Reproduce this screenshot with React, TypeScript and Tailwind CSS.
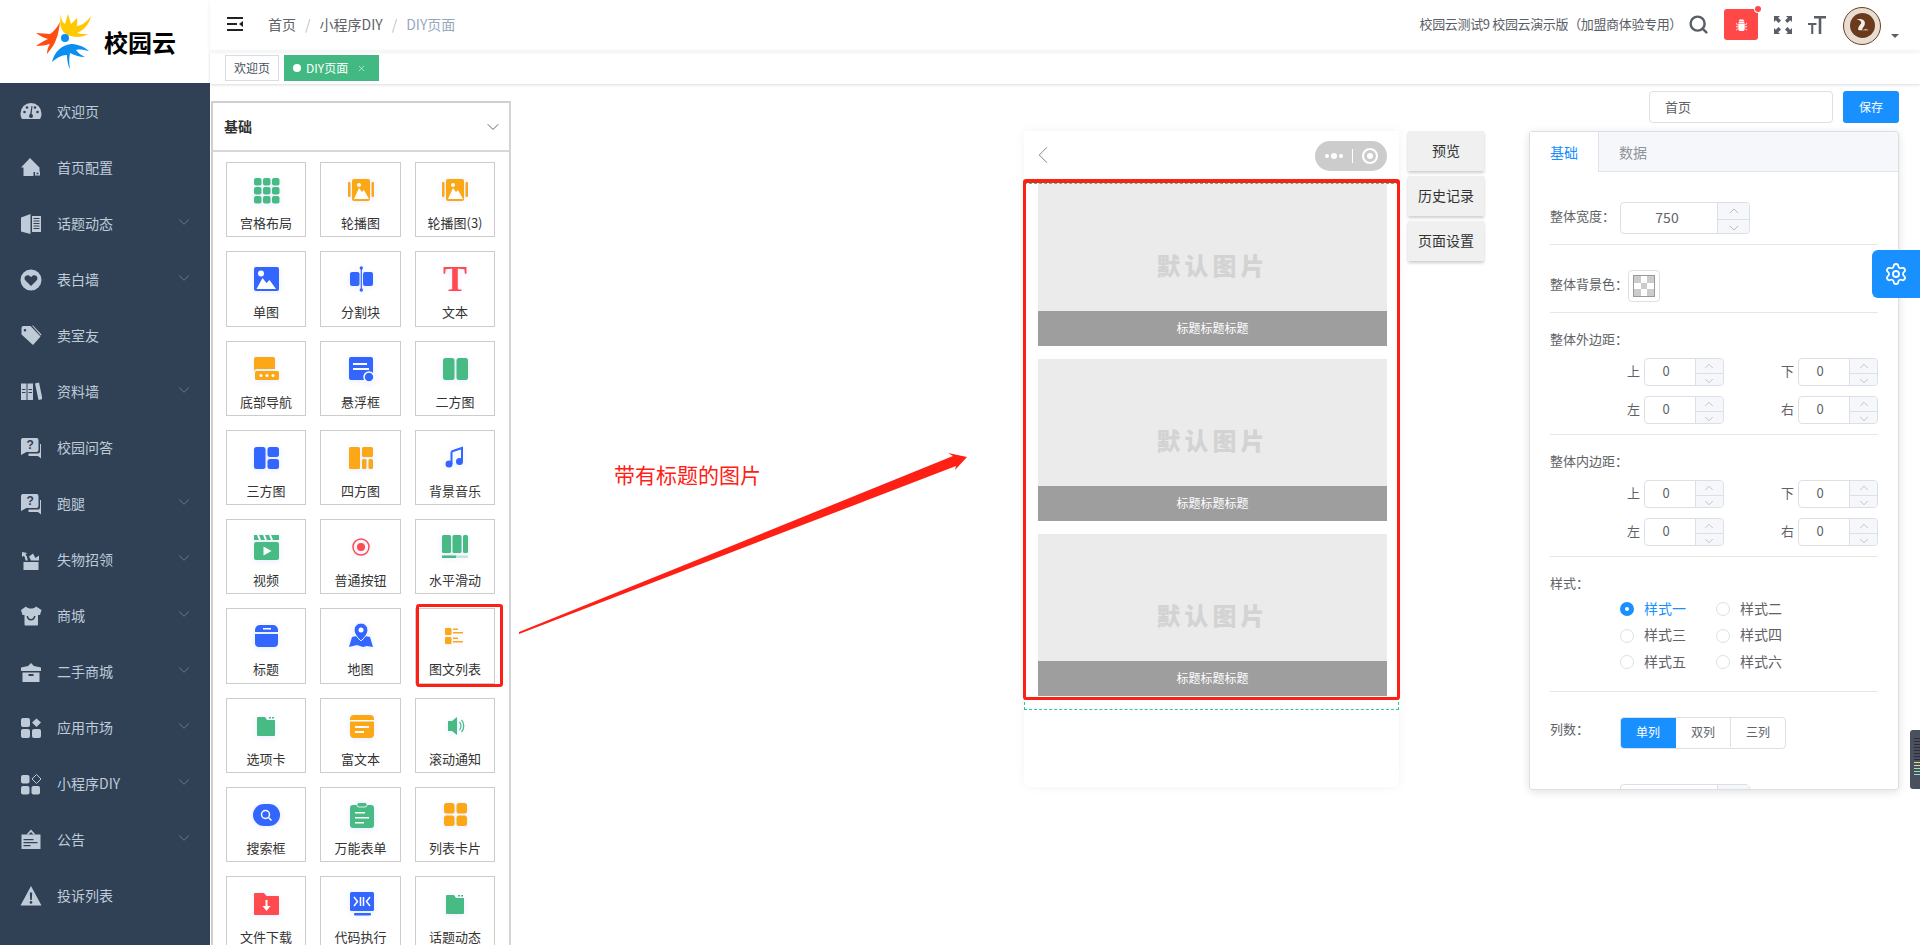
import { ChevronDown, ChevronLeft, ChevronUp, Search, Settings, X } from 'lucide-react';
import type { ReactNode } from 'react';

const font = { fontFamily: '"Noto Sans CJK SC", "Liberation Sans", sans-serif' };

const ORANGE = '#fca715';
const GREEN = '#48bb85';
const BLUE = '#3366ff';
const RED = '#ff4a50';

const navIcons: Record<string, ReactNode> = {
  gauge: (
    <>
      <path d="M11 2a10.500 10.500 0 0 0-10.500 10.500c0 2 .5 4 1.500 5.500h18c1-1.500 1.500-3.500 1.500-5.500A10.500 10.500 0 0 0 11 2z" />
      <g fill="#304156">
        <circle cx="4.500" cy="11" r="1.300" />
        <circle cx="7" cy="6.500" r="1.300" />
        <circle cx="15" cy="6.500" r="1.300" />
        <circle cx="17.500" cy="11" r="1.300" />
        <path d="M11.500 5h1l-1 9h-1.500z" />
        <circle cx="11" cy="15" r="2" />
      </g>
    </>
  ),
  home: (
    <>
      <path d="M10 1 1 10.500h2.500V19h8.500v-4h7.500V10.500z" />
      <path d="M12 14.500h1.500V19H12zM15 14.500h5v4h-5zm1.500 1.200v1.600h2v-1.600z" />
    </>
  ),
  book: (
    <>
      <path d="M1 4.500 10.500 1v20L1 18.500z" />
      <path d="M12 3h9v16h-9zm1.500 2v1h6V5zm0 2.500v1h6v-1zm0 2.500v1h6v-1zm0 2.500v1h6v-1zm0 2.500v1h6v-1z" />
    </>
  ),
  heart: (
    <path
      fillRule="evenodd"
      d="M11 .5a10.500 10.500 0 1 0 0 21 10.500 10.500 0 0 0 0-21zM11 17 5.500 11.500c-2.500-3 .5-6.500 3.500-5 1 .5 1.500 1 2 1.800.5-.8 1-1.300 2-1.800 3-1.500 6 2 3.500 5z"
    />
  ),
  tag: (
    <>
      <path d="M3.500 1h7l10 10.500-7.500 8.500L1.500 9.500V3a2 2 0 0 1 2-2zm1.500 3a1.300 1.300 0 1 0 0 2.600A1.300 1.300 0 0 0 5 4z" fillRule="evenodd" />
      <path d="M12 .5h1l8.500 9-.8 1z" />
    </>
  ),
  shelf: (
    <path
      fillRule="evenodd"
      d="M1 2.500h5.500v16.500H1zM7.500 2.500H13V19H7.500zM15 2.500l4-1 3.500 16.500-4 1zM2 8v1h3.500V8zm0 3v1h3.500v-1zm6.500-3v1H12V8zm0 3v1H12v-1z"
    />
  ),
  ask: (
    <>
      <path d="M2.500 1h14a2 2 0 0 1 2 2v10a2 2 0 0 1-2 2H6.500L1 18V3a2 2 0 0 1 1.500-2z" />
      <path d="M20 7h1v14.500L18 19H8.500v-2.500h9.500a2 2 0 0 0 2-2z" />
      <text x="6.500" y="11.500" fontSize="12" fontWeight="700" fill="#304156" fontFamily="Liberation Sans">?</text>
    </>
  ),
  lost: (
    <>
      <path d="M3.500 13h15v8h-15zM2 3l5 1-1.500 1.500c1 1 2 3 2.200 6H5.500c-.2-2.200-.8-3.800-1.700-4.800L2 8zM11 11.500l-2-4 4-3 2.500 4.500 3.500-2.500v5z" />
    </>
  ),
  shop: (
    <path
      fillRule="evenodd"
      d="M6 1.500C7 3 9 3.500 11 3.500s4-.5 5-2l5.500 3.500-1.500 5h-2v9.500a1 1 0 0 1-1 1H5.500a1 1 0 0 1-1-1V10h-2L1 5zM6.500 11c.5 3 2.200 4.500 4.500 4.500s4-1.500 4.500-4.500H14c-.4 2-1.500 3-3 3s-2.600-1-3-3z"
    />
  ),
  gift: (
    <>
      <path d="M1 6.500 8 5l3-3 3 3 7 1.500V10H1z" />
      <path fillRule="evenodd" d="M2.500 11.500h17V21h-17zM8.500 13v2h5v-2z" />
    </>
  ),
  apps: (
    <>
      <rect x="1" y="1" width="9" height="9" rx="2" />
      <rect x="1" y="12" width="9" height="9" rx="2" />
      <rect x="12" y="12" width="9" height="9" rx="2" />
      <path d="M16.500 1.500 21 5.500l-4.500 4.500-4.500-4.500z" />
    </>
  ),
  appsOutline: (
    <>
      <rect x="1" y="2" width="8.500" height="8.500" rx="2" />
      <rect x="1" y="13" width="8.500" height="8.500" rx="2" />
      <rect x="11.500" y="13" width="8.500" height="8.500" rx="2" />
      <path d="m16.500 1.500 4.500 4.500-4.500 4.500L12 6z" fill="none" stroke="#bfcbd9" strokeWidth="1" />
    </>
  ),
  notice: (
    <>
      <path d="M11 .5 15.500 5.500h-2L11 3 8.500 5.500h-2z" />
      <path fillRule="evenodd" d="M1.500 5.500h19V20h-19zM3.500 10v1.200h10V10zm0 3v1.200h14V13zm0 3v1.200h7V16z" />
    </>
  ),
  warn: (
    <path
      fillRule="evenodd"
      d="M11 1 21.500 20.500h-21zM9.800 7.500l.4 7.500h1.600l.4-7.500zM11 16a1.400 1.400 0 1 0 0 2.800 1.400 1.400 0 0 0 0-2.800z"
    />
  ),
};

const menu = [
  { label: '欢迎页', icon: 'gauge' },
  { label: '首页配置', icon: 'home' },
  { label: '话题动态', icon: 'book', sub: true },
  { label: '表白墙', icon: 'heart', sub: true },
  { label: '卖室友', icon: 'tag' },
  { label: '资料墙', icon: 'shelf', sub: true },
  { label: '校园问答', icon: 'ask' },
  { label: '跑腿', icon: 'ask', sub: true },
  { label: '失物招领', icon: 'lost', sub: true },
  { label: '商城', icon: 'shop', sub: true },
  { label: '二手商城', icon: 'gift', sub: true },
  { label: '应用市场', icon: 'apps', sub: true },
  { label: '小程序DIY', icon: 'appsOutline', sub: true },
  { label: '公告', icon: 'notice', sub: true },
  { label: '投诉列表', icon: 'warn' },
];

function Picture({ color, x = 5, w = 18 }: { color: string; x?: number; w?: number }) {
  return (
    <>
      <rect x={x} y="3" width={w} height="22" rx="2" fill={color} />
      <path d={`M${x + 2} 23l5-11 3 4 2-2 5 9z`} fill="#fff" />
      <circle cx={x + 7} cy="9" r="2" fill="#fff" />
    </>
  );
}

const widgetIcons: Record<string, ReactNode> = {
  grid: (
    <g fill={GREEN}>
      {[2, 11, 20].flatMap((y) =>
        [2, 11, 20].map((x) => <rect key={`${x}-${y}`} x={x} y={y} width="7.500" height="7.500" rx="2" />),
      )}
    </g>
  ),
  carousel: (
    <>
      <Picture color={ORANGE} />
      <rect x="1" y="6" width="2.500" height="15" rx="1" fill={ORANGE} />
      <rect x="24.500" y="6" width="2.500" height="15" rx="1" fill={ORANGE} />
    </>
  ),
  single: (
    <>
      <rect x="2" y="2" width="25" height="24" rx="2" fill={BLUE} />
      <path d="M4.500 24l6-11 4 5 3-3 6.500 9z" fill="#fff" />
      <circle cx="9" cy="8.500" r="3" fill="#fff" />
    </>
  ),
  divider: (
    <>
      <rect x="3" y="7" width="9.500" height="14" rx="2" fill={BLUE} />
      <rect x="16" y="7" width="10" height="14" rx="2" fill={BLUE} />
      <rect x="13.700" y="3" width="1.200" height="22" fill={BLUE} />
      <circle cx="14.300" cy="3" r="1.700" fill={BLUE} />
      <circle cx="14.300" cy="25" r="1.700" fill={BLUE} />
    </>
  ),
  text: (
    <text x="14" y="26" textAnchor="middle" fontSize="36" fontWeight="700" fill={RED} fontFamily="Liberation Serif">
      T
    </text>
  ),
  tabbar: (
    <>
      <path d="M2 4a2 2 0 0 1 2-2h17a2 2 0 0 1 2 2v10H5a3 3 0 0 0-3 3z" fill={ORANGE} />
      <rect x="3" y="16" width="24" height="9" rx="1.500" fill={ORANGE} />
      <g fill="#fff">
        <circle cx="9" cy="20.500" r="1.500" />
        <circle cx="15" cy="20.500" r="1.500" />
        <circle cx="21" cy="20.500" r="1.500" />
      </g>
    </>
  ),
  float: (
    <>
      <rect x="2" y="2" width="24" height="23" rx="2" fill={BLUE} />
      <path d="M6 8h14v2H6zM6 13h16v2H6z" fill="#fff" />
      <circle cx="22" cy="22" r="5" fill={BLUE} stroke="#fff" strokeWidth="1.500" />
    </>
  ),
  two: (
    <>
      <rect x="2" y="3" width="11.500" height="22" rx="2.500" fill={GREEN} />
      <rect x="15.500" y="3" width="11.500" height="22" rx="2.500" fill={GREEN} />
    </>
  ),
  three: (
    <>
      <rect x="2" y="3" width="11.500" height="22" rx="2.500" fill={BLUE} />
      <rect x="15.500" y="3" width="11.500" height="10" rx="2.500" fill={BLUE} />
      <rect x="15.500" y="15" width="11.500" height="10" rx="2.500" fill={BLUE} />
    </>
  ),
  four: (
    <>
      <rect x="2" y="3" width="11" height="22" rx="1.500" fill={ORANGE} />
      <rect x="15" y="3" width="11" height="10" rx="1.500" fill={ORANGE} />
      <rect x="15" y="15" width="4.500" height="10" rx="1.500" fill={ORANGE} />
      <rect x="21.500" y="15" width="4.500" height="10" rx="1.500" fill={ORANGE} />
    </>
  ),
  music: (
    <>
      <path d="M10.500 7.500 21 4v14" fill="none" stroke={BLUE} strokeWidth="2" />
      <path d="M10.500 7.500V20" fill="none" stroke={BLUE} strokeWidth="2" />
      <circle cx="8" cy="20" r="3.500" fill={BLUE} />
      <circle cx="18.500" cy="17.500" r="3.500" fill={BLUE} />
    </>
  ),
  video: (
    <>
      <rect x="2" y="9" width="25" height="18" rx="2" fill={GREEN} />
      <path d="M2 2h25v5H2z" fill={GREEN} />
      <path d="M6 2 8 7M12 2l2 5M18 2l2 5" stroke="#fff" strokeWidth="2" />
      <path d="M11.500 13.500v9l8-4.500z" fill="#fff" />
    </>
  ),
  button: (
    <>
      <circle cx="14" cy="14" r="8" fill="none" stroke={RED} strokeWidth="1.500" />
      <circle cx="14" cy="14" r="4" fill={RED} />
    </>
  ),
  slide: (
    <g fill={GREEN}>
      <rect x="1" y="2" width="9" height="18" rx="1.500" />
      <rect x="11.500" y="2" width="9" height="18" rx="1.500" />
      <rect x="22" y="2" width="5" height="18" rx="1.500" />
      <rect x="1" y="22.500" width="26" height="2.500" opacity="0.3" />
      <rect x="1" y="22.500" width="14" height="2.500" />
    </g>
  ),
  title: (
    <>
      <path d="M3 8a5 5 0 0 1 5-5h13a5 5 0 0 1 5 5v2H3z" fill={BLUE} />
      <path d="M3 12h23v9a4 4 0 0 1-4 4H7a4 4 0 0 1-4-4z" fill={BLUE} />
      <rect x="11" y="6" width="8" height="1.500" fill="#fff" />
    </>
  ),
  map: (
    <>
      <path d="M2 25l3-10 5-1 4 5 4-5 5 1 3 10-6-1-4 1-6-2z" fill={BLUE} />
      <path d="M14 1a7 7 0 0 0-7 7c0 5 7 11 7 11s7-6 7-11a7 7 0 0 0-7-7z" fill={BLUE} stroke="#fff" />
      <circle cx="14" cy="8" r="2.500" fill="#fff" />
    </>
  ),
  article: (
    <g fill={ORANGE}>
      <rect x="4" y="6" width="6.500" height="7" rx="1" />
      <rect x="4" y="15" width="6.500" height="7" rx="1" />
      <path d="M12 6.500h5v1.500h-5zM12 10h10v1.500H12zM12 15.500h5V17h-5zM12 19h10v1.500H12z" />
    </g>
  ),
  tabs: (
    <>
      <path d="M5 6a1 1 0 0 1 1-1h7l2 3h8v15a1 1 0 0 1-1 1H6a1 1 0 0 1-1-1z" fill={GREEN} />
      <path d="M17 5h2v1.500h-2zM20 5h2v1.500h-2z" fill={GREEN} />
    </>
  ),
  rich: (
    <>
      <rect x="3" y="3" width="24" height="23" rx="4" fill={ORANGE} />
      <rect x="3" y="8" width="24" height="1.500" fill="#fff" />
      <path d="M8 14h14v2H8zM8 19h9v2H8z" fill="#fff" />
    </>
  ),
  speaker: (
    <>
      <path d="M7 9h4l5-4v18l-5-4H7z" fill={GREEN} />
      <path d="M18.500 10c2 2 2 6 0 8M20.500 8c3 3 3 9 0 12" fill="none" stroke={GREEN} strokeWidth="1.200" />
    </>
  ),
  search: (
    <>
      <rect x="1" y="3" width="27" height="22" rx="11" fill={BLUE} />
      <circle cx="13.500" cy="13.500" r="4" fill="none" stroke="#fff" strokeWidth="1.500" />
      <path d="m16.500 16.500 3 3" stroke="#fff" strokeWidth="1.500" />
    </>
  ),
  form: (
    <>
      <rect x="3" y="4" width="24" height="23" rx="3" fill={GREEN} />
      <rect x="10" y="1.500" width="10" height="4.500" rx="2" fill={GREEN} stroke="#fff" strokeWidth="0.800" />
      <path d="M8 11h10v1.500H8zM8 16h14v1.500H8zM8 21h9v1.500H8z" fill="#fff" />
    </>
  ),
  cards: (
    <g fill={ORANGE}>
      <rect x="3" y="2" width="10.500" height="10.500" rx="2.500" />
      <rect x="15.500" y="2" width="10.500" height="10.500" rx="2.500" />
      <rect x="3" y="14.500" width="10.500" height="10.500" rx="2.500" />
      <rect x="15.500" y="14.500" width="10.500" height="10.500" rx="2.500" />
    </g>
  ),
  download: (
    <>
      <path d="M2 4a1 1 0 0 1 1-1h9l2.500 3H26a1 1 0 0 1 1 1v17a1 1 0 0 1-1 1H3a1 1 0 0 1-1-1z" fill={RED} />
      <path d="M13.500 10h2v6h3l-4 5-4-5h3z" fill="#fff" />
    </>
  ),
  code: (
    <>
      <rect x="3" y="2" width="24" height="19" rx="1.500" fill={BLUE} />
      <rect x="7" y="23" width="17" height="2.500" rx="1" fill={BLUE} />
      <path d="m7 7 3.500 4.500L7 16M23 7l-3.500 4.500L23 16" fill="none" stroke="#fff" strokeWidth="1.500" />
      <path d="M13.500 7v9M16.500 7v9" stroke="#fff" strokeWidth="1.500" />
    </>
  ),
};

const widgets = [
  ['宫格布局', 'grid'],
  ['轮播图', 'carousel'],
  ['轮播图(3)', 'carousel'],
  ['单图', 'single'],
  ['分割块', 'divider'],
  ['文本', 'text'],
  ['底部导航', 'tabbar'],
  ['悬浮框', 'float'],
  ['二方图', 'two'],
  ['三方图', 'three'],
  ['四方图', 'four'],
  ['背景音乐', 'music'],
  ['视频', 'video'],
  ['普通按钮', 'button'],
  ['水平滑动', 'slide'],
  ['标题', 'title'],
  ['地图', 'map'],
  ['图文列表', 'article'],
  ['选项卡', 'tabs'],
  ['富文本', 'rich'],
  ['滚动通知', 'speaker'],
  ['搜索框', 'search'],
  ['万能表单', 'form'],
  ['列表卡片', 'cards'],
  ['文件下载', 'download'],
  ['代码执行', 'code'],
  ['话题动态', 'tabs'],
];

function Logo() {
  return (
    <svg viewBox="0 0 60 58" className="h-[58px] w-[60px]">
      <path d="M26 1c0 6 2 9 4 10l3-10 3 10 6-6c1 4-.5 7 0 8 3 0 9-3 14-10-2 9-7 14-14 17 3 1 7 1 11 1-6 4-15 4-22 0-5-3-7-10-5-20z" fill="#ffc800" />
      <path d="M25 9c-1 7-2 16-7 24l-6 8c0-4 1-7 3-10-4 1-9 2-14 2 3-2 7-5 12-7-4-1-8-3-12-6 5 0 10 1 14 1 3-2 7-6 10-12z" fill="#ff4d12" />
      <circle cx="30" cy="25" r="4" fill="#0a8ff0" />
      <path d="M17 49c2-9 9-17 19-18 6 0 12 2 18 7-5-1-9-2-13-1 2 3 5 5 9 7-6 0-11-2-15-4-1 5-1 11 0 16-2-3-3-9-3-14-6 0-10 3-15 7z" fill="#0a8ff0" />
    </svg>
  );
}

function NavItem({ label, icon, sub }: { label: string; icon: string; sub?: boolean }) {
  return (
    <div className="flex h-[56px] items-center pl-[20px] pr-[17px] text-[14px] text-[#bfcbd9]">
      <svg viewBox="0 0 22 22" className="h-[22px] w-[22px] fill-[#bfcbd9]">
        {navIcons[icon]}
      </svg>
      <span className="ml-[15px] flex-1 -translate-y-px">{label}</span>
      {sub && <ChevronDown size={18} strokeWidth={0.9} className="-translate-y-[2px] text-[#8795a6]" />}
    </div>
  );
}

function WidgetCard({ label, icon }: { label: string; icon: string }) {
  return (
    <div className="flex h-[75.3px] flex-col items-center border border-[#cccccc] pt-[13px] text-[13px] leading-[20px] text-[#333333]">
      <svg viewBox="0 0 28 28" className="h-[28px] w-[28px] shrink-0 overflow-visible drop-shadow-[0_1px_3px_rgba(80,120,255,0.15)]">
        {widgetIcons[icon]}
      </svg>
      <span className="mt-[9px] whitespace-nowrap">{label}</span>
    </div>
  );
}

function NumberBox({ value = '0', big }: { value?: string; big?: boolean }) {
  return (
    <div className={`flex overflow-hidden rounded-[4px] border border-[#dcdfe6] text-[#606266] ${big ? 'h-[32px] w-[130px] text-[14px]' : 'h-[28px] w-[80px] text-[13px]'}`}>
      <div className={`flex flex-1 -translate-y-px items-center justify-center ${big ? 'pr-[4px]' : 'pr-[8px]'}`}>{value}</div>
      <div className={`flex flex-col border-l border-[#dcdfe6] bg-[#f5f7fa] text-[#909399] ${big ? 'w-[32px]' : 'w-[28px]'}`}>
        <div className="flex flex-1 items-center justify-center border-b border-[#dcdfe6]">
          <ChevronUp size={big ? 16 : 14} strokeWidth={0.9} />
        </div>
        <div className="flex flex-1 items-center justify-center">
          <ChevronDown size={big ? 16 : 14} strokeWidth={0.9} />
        </div>
      </div>
    </div>
  );
}

function Spacing({ title }: { title: string }) {
  return (
    <div>
      <div className="mt-[16px] text-[13px] leading-[20px] text-[#606266]">{title}</div>
      <div className="mt-[9px] flex flex-col gap-[10px]">
        {[
          ['上', '下'],
          ['左', '右'],
        ].map((pair) => (
          <div key={pair[0]} className="flex justify-end gap-[57px]">
            {pair.map((side) => (
              <div key={side} className="flex items-center gap-[4px] text-[13px] text-[#606266]">
                <span className="-translate-y-px">{side}</span>
                <NumberBox />
              </div>
            ))}
          </div>
        ))}
      </div>
      <div className="mt-[10px] h-px bg-[#e6e6e6]" />
    </div>
  );
}

function PhoneBlock() {
  return (
    <div className="mb-[13px] mr-[11px] ml-[13px]">
      <div className="flex h-[127px] items-center justify-center bg-[#ebebeb] pt-[34px] text-[24px] font-black tracking-[4px] text-[#d3d3d3]">
        默认图片
      </div>
      <div className="flex h-[35px] items-center justify-center bg-[#9e9e9e] pb-[2px] text-[12px] text-white">标题标题标题</div>
    </div>
  );
}

export default function App() {
  return (
    <div style={font} className="relative flex h-[945px] w-[1920px] overflow-hidden bg-white">
      <aside className="flex w-[210px] shrink-0 flex-col">
        <div className="flex h-[83px] items-center pl-[35px]">
          <Logo />
          <span className="ml-[9px] text-[24px] font-bold leading-none text-black">校园云</span>
        </div>
        <nav className="flex-1 bg-[#304156] pt-px">
          {menu.map((item) => (
            <NavItem key={item.label} {...item} />
          ))}
        </nav>
      </aside>

      <main className="flex min-w-0 flex-1 flex-col">
        <header className="flex h-[51px] items-center justify-between pb-[3px] pl-[17px] pr-[21px] shadow-[0_1px_4px_rgba(0,21,41,0.08)]">
          <div className="flex items-center text-[14px]">
            <svg viewBox="0 0 16 14" className="h-[14px] w-[16px]">
              <path d="M0 0h16v2H0zM0 6h10v2H0zM0 12h16v2H0zM16 4v6l-4-3z" fill="#222" />
            </svg>
            <span className="ml-[25px] text-[#606266]">首页</span>
            <span className="mx-[9px] text-[#c0c4cc]">/</span>
            <span className="text-[#606266]">小程序DIY</span>
            <span className="mx-[9px] text-[#c0c4cc]">/</span>
            <span className="text-[#97a8be]">DIY页面</span>
          </div>
          <div className="flex items-center">
            <span className="text-[13px] tracking-[-0.35px] text-[#5a5e66]">校园云测试9 校园云演示版（加盟商体验专用）</span>
            <Search size={21} strokeWidth={2.800} className="ml-[6px] text-[#5a5e66]" />
            <div className="relative ml-[15px] flex h-[31px] w-[34px] items-center justify-center rounded-[3px] bg-[#ff4949]">
              <svg viewBox="0 0 14 14" className="h-[13px] w-[13px] fill-white">
                <path d="M4 4h6v1.500H4zM3.500 6h7v5a3.500 3.500 0 0 1-7 0zM5 1.500h4L10 3.500H4zM1 5l2 2v1L1 6.500zM13 5l-2 2v1l2-1.500zM1 9h2v1H1zM11 9h2v1h-2zM1 13l2-2v1l-1.500 1.500zM13 13l-2-2v1l1.500 1.500z" />
              </svg>
              <span className="absolute right-[-3px] top-[-3px] h-[6px] w-[6px] rounded-full bg-[#ff4949] ring-1 ring-white" />
            </div>
            <svg viewBox="0 0 18 18" className="ml-[16px] mt-[2px] h-[18px] w-[18px] fill-[#5a5e66]">
              <path d="M0 0h6L4.200 1.800 7 4.600 4.600 7 1.800 4.200 0 6zM18 0v6l-1.800-1.800L13.400 7 11 4.600l2.800-2.800L12 0zM0 18v-6l1.800 1.800L4.600 11 7 13.400l-2.800 2.800L6 18zM18 18h-6l1.800-1.800L11 13.400 13.400 11l2.800 2.800L18 12z" />
            </svg>
            <svg viewBox="0 0 18 18" className="ml-[16px] mt-[2px] h-[18px] w-[18px] fill-[#5a5e66]">
              <path d="M6 0h12v2.500h-4.700V18h-2.600V2.500H6zM0 7h8.500v2H5.300v9H3.200V9H0z" />
            </svg>
            <div className="relative ml-[17px] mt-[3px] flex h-[38px] w-[38px] items-center justify-center rounded-full border border-[#6b3f20] bg-[#e8ddd0]">
              <div className="flex h-[25px] w-[25px] items-center justify-center rounded-full bg-[#6b3a1e]">
                <svg viewBox="0 0 16 16" className="h-[19px] w-[19px]">
                  <path d="M3 3c3-1 7 0 7 3 0 3-3 4-2 6 2-1 4-1 5 0H5c-2-1 1-5 2-6 0-2-2-3-4-3z" fill="#f4efe6" />
                </svg>
              </div>
            </div>
            <span className="ml-[10px] mt-[23px] h-0 w-0 border-x-[4px] border-t-[4px] border-x-transparent border-t-[#5a5e66]" />
          </div>
        </header>

        <div className="flex h-[33px] items-start gap-[5px] pl-[15px] pt-[4px] shadow-[0_1px_3px_rgba(0,0,0,0.12),0_0_3px_rgba(0,0,0,0.04)]">
          <div className="flex h-[26px] w-[54px] items-center justify-center border border-[#d8dce5] text-[12px] text-[#495060]">欢迎页</div>
          <div className="flex h-[26px] w-[95px] items-center bg-[#42b983] pl-[9px] text-[12px] text-white">
            <span className="h-[8px] w-[8px] rounded-full bg-white" />
            <span className="ml-[5px]">DIY页面</span>
            <X size={9} strokeWidth={1.500} className="ml-[9px]" />
          </div>
        </div>

        <div className="flex min-h-0 flex-1">
          <section className="ml-px mt-[17px] h-[900px] w-[300px] shrink-0 border-2 border-b-0 border-[#d4d4d4] border-t-[#cfcfcf] border-l-[#cfcfcf]">
            <div className="flex h-[49px] items-center justify-between border-b-2 border-[#d8d8d8] pl-[11px] pr-[6px] text-[14px] font-bold text-[#303133]">
              <span>基础</span>
              <ChevronDown size={20} strokeWidth={0.9} className="text-[#303133]" />
            </div>
            <div className="grid grid-cols-[80px_81px_80px] gap-x-[14px] gap-y-[14px] pl-[13px] pt-[10px]">
              {widgets.map(([label, icon], i) => (
                <WidgetCard key={i} label={label} icon={icon} />
              ))}
            </div>
          </section>

          <div className="flex-1 pt-[7px]">
            <div className="flex h-[32px] justify-end gap-[10px] pr-[21px]">
              <div className="flex w-[184px] items-center rounded-[4px] border border-[#dcdfe6] pl-[15px] text-[13px] text-[#606266]">首页</div>
              <button className="w-[56px] rounded-[3px] bg-[#1890ff] text-[12px] text-white">保存</button>
            </div>

            <div className="mt-[8px] flex items-start pl-[513px]">
              <div className="relative h-[656px] w-[375px] rounded-b-[8px] shadow-[0_0_12px_rgba(0,0,0,0.05)]">
                <div className="flex h-[52px] items-start justify-between pl-[4px] pr-[12px] pt-[9px]">
                  <ChevronLeft size={30} strokeWidth={0.8} className="text-[#7a8796]" />
                  <div className="mt-px flex h-[30px] w-[72px] items-center justify-center rounded-full bg-[#cccccc]">
                    <span className="flex items-center gap-[2px]">
                      <span className="h-[4px] w-[4px] rounded-full bg-white" />
                      <span className="h-[6px] w-[6px] rounded-full bg-white" />
                      <span className="h-[4px] w-[4px] rounded-full bg-white" />
                    </span>
                    <span className="mx-[9px] h-[14px] w-px bg-white" />
                    <span className="flex h-[16px] w-[16px] items-center justify-center rounded-full border-2 border-white">
                      <span className="h-[6px] w-[6px] rounded-full bg-white" />
                    </span>
                  </div>
                </div>
                <div className="h-[527px] border border-dashed border-[#2ecb9a]">
                  <PhoneBlock />
                  <PhoneBlock />
                  <PhoneBlock />
                </div>
                <div className="pointer-events-none absolute left-[-1px] top-[48px] h-[521px] w-[377px] rounded-[3px] border-[3px] border-t-4 border-[#ff2015]" />
              </div>

              <div className="ml-[9px] flex w-[76px] flex-col gap-[5px]">
                {['预览', '历史记录', '页面设置'].map((label) => (
                  <div key={label} className="flex h-[40px] items-center justify-center bg-[#f0f0f0] pb-[2px] text-[14px] text-[#333333] shadow-[0_2px_3px_rgba(0,0,0,0.2)]">
                    {label}
                  </div>
                ))}
              </div>

              <div className="ml-[45px] h-[659px] w-[370px] overflow-hidden rounded-[3px] border border-[#dcdfe6] shadow-[0_2px_8px_rgba(0,0,0,0.12)]">
                <div className="flex h-[40px] border-b border-[#dfe4ed] bg-[#f5f7fa] text-[14px]">
                  <div className="-mb-px flex w-[69px] items-center justify-center border-r border-[#dfe4ed] bg-white text-[#1890ff]">基础</div>
                  <div className="flex items-center px-[20px] pt-px text-[#909399]">数据</div>
                </div>
                <div className="px-[20px]">
                  <div className="flex items-center pt-[30px] text-[13px] text-[#606266]">
                    <span className="w-[70px] -translate-y-[2px]">整体宽度：</span>
                    <NumberBox value="750" big />
                  </div>
                  <div className="mt-[10px] h-px bg-[#e6e6e6]" />
                  <div className="mt-[25px] flex items-center text-[13px] text-[#606266]">
                    <span className="w-[78px] -translate-y-[2px] whitespace-nowrap">整体背景色：</span>
                    <div className="flex h-[32px] w-[32px] items-center justify-center rounded-[4px] border border-[#dcdfe6]">
                      <div className="grid h-[22px] w-[22px] grid-cols-3 grid-rows-3 border border-[#999999]">
                        {[0, 1, 2, 3, 4, 5, 6, 7, 8].map((n) => (
                          <span key={n} className={n % 2 === 0 ? 'bg-[#cccccc]' : 'bg-white'} />
                        ))}
                      </div>
                    </div>
                  </div>
                  <div className="mt-[10px] h-px bg-[#e6e6e6]" />

                  <Spacing title="整体外边距：" />
                  <Spacing title="整体内边距：" />

                  <div className="mt-[16px] text-[13px] leading-[20px] text-[#606266]">样式：</div>
                  <div className="mt-[3px] grid grid-cols-[96px_96px] grid-rows-[26.5px_26.5px_26.5px] pl-[70px] text-[14px] text-[#606266]">
                    {['样式一', '样式二', '样式三', '样式四', '样式五', '样式六'].map((label, i) => (
                      <div key={label} className="flex items-center gap-[10px]">
                        {i === 0 ? (
                          <span className="flex h-[14px] w-[14px] items-center justify-center rounded-full bg-[#1890ff]">
                            <span className="h-[4px] w-[4px] rounded-full bg-white" />
                          </span>
                        ) : (
                          <span className="h-[14px] w-[14px] rounded-full border border-[#dcdfe6]" />
                        )}
                        <span className={`-translate-y-px ${i === 0 ? 'text-[#1890ff]' : ''}`}>{label}</span>
                      </div>
                    ))}
                  </div>
                  <div className="mt-[15px] h-px bg-[#e6e6e6]" />

                  <div className="mt-[25px] flex text-[13px] text-[#606266]">
                    <span className="w-[70px] leading-[24px]">列数：</span>
                    <div className="flex h-[32px] w-[166px] overflow-hidden rounded-[4px] border border-[#dcdfe6] pb-px text-[12px]">
                      <div className="-my-px -ml-px flex w-[56px] items-center justify-center bg-[#1890ff] text-white">单列</div>
                      <div className="flex w-[55px] items-center justify-center border-r border-[#dcdfe6]">双列</div>
                      <div className="flex flex-1 items-center justify-center">三列</div>
                    </div>
                  </div>
                  <div className="ml-[70px] mt-[35px] flex h-[32px] w-[130px] justify-end rounded-[4px] border border-[#dcdfe6]">
                    <div className="w-[32px] border-l border-[#dcdfe6] bg-[#f5f7fa]" />
                  </div>
                </div>
              </div>
            </div>
          </div>
        </div>
      </main>

      <div className="absolute right-0 top-[250px] flex h-[48px] w-[48px] items-center justify-center rounded-l-[6px] bg-[#1890ff] text-white">
        <Settings size={24} strokeWidth={1.800} />
      </div>
      <div className="absolute right-0 top-[730px] flex h-[59px] w-[10px] flex-col gap-[2px] rounded-l-[3px] bg-[#4a5060] pl-[4px] pt-[8px]">
        {['#2b2e36', '#2b2e36', '#2b2e36', '#2b2e36', '#2b2e36', '#2b2e36', '#2b2e36', '#2b2e36', '#d8e48c', '#d8e48c', '#a8e2a0', '#8be4c4', '#8be4c4'].map((c, i) => (
          <span key={i} className="h-px w-full" style={{ backgroundColor: c }} />
        ))}
      </div>

      <div className="pointer-events-none absolute left-[416px] top-[604px] h-[83px] w-[87px] rounded-[3px] border-[3px] border-[#ff2015]" />
      <span className="absolute left-[614px] top-[460px] text-[21px] leading-[28px] text-[#ff2015]">带有标题的图片</span>
      <svg viewBox="0 0 1920 945" className="pointer-events-none absolute left-0 top-0 h-[945px] w-[1920px]">
        <polygon points="519,632 953,456 948,453 967,457 955,470 956,466 519,634" fill="#ff2015" />
      </svg>
    </div>
  );
}
